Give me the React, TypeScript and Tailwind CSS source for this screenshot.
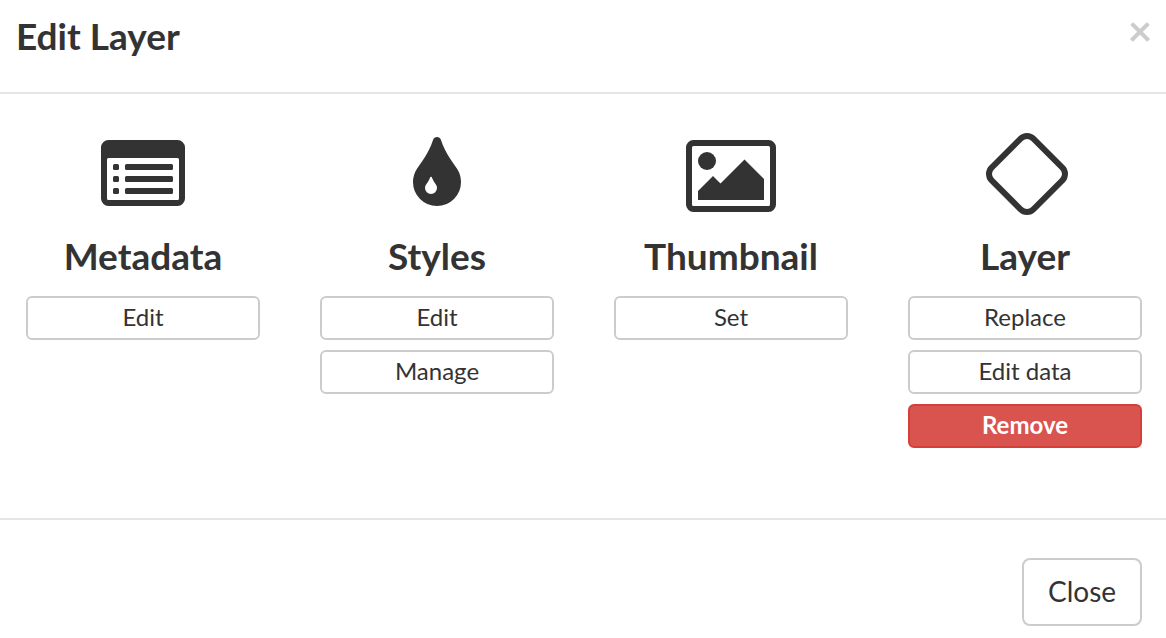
import type { ReactNode } from "react";

type Action = { label: string; danger?: boolean };
type Section = { title: string; icon: ReactNode; actions: Action[] };

function ListIcon() {
  return (
    <svg width="84" height="66" viewBox="0 0 84 66" fill="currentColor" aria-hidden="true">
      <path
        fillRule="evenodd"
        d="M7.5 0h69A7.5 7.5 0 0 1 84 7.5v51a7.5 7.5 0 0 1-7.5 7.5h-69A7.5 7.5 0 0 1 0 58.5v-51A7.5 7.5 0 0 1 7.5 0zM7.5 18A1.5 1.5 0 0 0 6 19.5v39A1.5 1.5 0 0 0 7.5 60h69a1.5 1.5 0 0 0 1.5-1.5v-39a1.5 1.5 0 0 0-1.5-1.5z"
      />
      {[24, 36, 48].map((y) => (
        <g key={y}>
          <rect x="12" y={y} width="6" height="6" rx="1.5" />
          <rect x="24" y={y} width="48" height="6" rx="1.5" />
        </g>
      ))}
    </svg>
  );
}

function DropIcon() {
  return (
    <svg width="48" height="69" viewBox="0 0 1024 1472" fill="currentColor" aria-hidden="true">
      <path
        transform="translate(0 1472) scale(1 -1)"
        d="M512 384q0 36-20 69-1 1-15.5 22.5t-25.5 38-25 44-21 50.5q-4 16-21 16t-21-16q-7-23-21-50.5t-25-44-25.5-38-15.5-22.5q-20-33-20-69 0-53 37.5-90.5t90.5-37.5 90.5 37.5 37.5 90.5zM1024 512q0-212-150-362t-362-150-362 150-150 362q0 145 81 275 6 9 62.5 90.5t101 151 99.5 178 83 201.5q9 30 34 47t51 17 51.5-17 33.5-47q28-93 83-201.5t99.5-178 101-151 62.5-90.5q81-127 81-275z"
      />
    </svg>
  );
}

function PictureIcon() {
  return (
    <svg width="90" height="72" viewBox="0 0 90 72" fill="currentColor" aria-hidden="true">
      <path
        fillRule="evenodd"
        d="M7.5 0h75A7.5 7.5 0 0 1 90 7.5v57a7.5 7.5 0 0 1-7.5 7.5h-75A7.5 7.5 0 0 1 0 64.5v-57A7.5 7.5 0 0 1 7.5 0zM7.5 6A1.5 1.5 0 0 0 6 7.5v57A1.5 1.5 0 0 0 7.5 66h75a1.5 1.5 0 0 0 1.5-1.5v-57A1.5 1.5 0 0 0 82.5 6z"
      />
      <circle cx="21" cy="21" r="9" />
      <path d="M12 60v-9l15-15 7.5 7.5 24-24L78 39v21z" />
    </svg>
  );
}

function DiamondIcon() {
  return (
    <svg width="86" height="82" viewBox="-4 0 86 82" fill="none" aria-hidden="true">
      <rect
        x="11.5"
        y="11.5"
        width="59"
        height="59"
        rx="9"
        stroke="currentColor"
        strokeWidth="6"
        transform="rotate(45 41 41)"
      />
    </svg>
  );
}

const sections: Section[] = [
  {
    title: "Metadata",
    icon: <span className="pt-[7px]"><ListIcon /></span>,
    actions: [{ label: "Edit" }],
  },
  {
    title: "Styles",
    icon: <span className="pt-1"><DropIcon /></span>,
    actions: [{ label: "Edit" }, { label: "Manage" }],
  },
  {
    title: "Thumbnail",
    icon: <span className="pt-[7px]"><PictureIcon /></span>,
    actions: [{ label: "Set" }],
  },
  {
    title: "Layer",
    icon: <DiamondIcon />,
    actions: [{ label: "Replace" }, { label: "Edit data" }, { label: "Remove", danger: true }],
  },
];

function ActionButton({ label, danger }: Action) {
  return (
    <button
      type="button"
      className={
        danger
          ? "h-11 w-full rounded-md border-2 border-[#d43f3a] bg-[#d9534f] pb-[2px] text-2xl leading-9 font-bold text-white"
          : "h-11 w-full rounded-md border-2 border-[#cccccc] bg-white pb-[2px] text-2xl leading-9 text-[#333333]"
      }
    >
      {label}
    </button>
  );
}

export default function App() {
  return (
    <div role="dialog" aria-labelledby="dialog-title" className="bg-white font-['Lato',sans-serif] text-[#333333]">
      <header className="flex items-start justify-between border-b-2 border-[#e5e5e5] pt-[10px] pr-[14px] pb-[30px] pl-4">
        <h1 id="dialog-title" className="text-[37px] leading-[52px] font-bold">
          Edit Layer
        </h1>
        <button type="button" aria-label="Close dialog" className="text-[42px] leading-10 font-bold text-[#cccccc]">
          ×
        </button>
      </header>

      <main className="grid grid-cols-4 gap-[60px] pt-[39px] pr-6 pb-[70px] pl-[26px]">
        {sections.map((section) => (
          <section key={section.title} className="flex flex-col items-center">
            <div className="flex h-[99px] items-start">{section.icon}</div>
            <h2 className="text-[37px] leading-[48px] font-bold">{section.title}</h2>
            <div className="mt-4 flex w-full flex-col gap-[10px]">
              {section.actions.map((action) => (
                <ActionButton key={action.label} {...action} />
              ))}
            </div>
          </section>
        ))}
      </main>

      <footer className="flex justify-end border-t-2 border-[#e5e5e5] pt-[38px] pr-6 pb-3">
        <button
          type="button"
          className="h-[68px] w-[120px] rounded-lg border-2 border-[#cccccc] bg-white pb-[2px] text-[28px] leading-10 text-[#333333]"
        >
          Close
        </button>
      </footer>
    </div>
  );
}
